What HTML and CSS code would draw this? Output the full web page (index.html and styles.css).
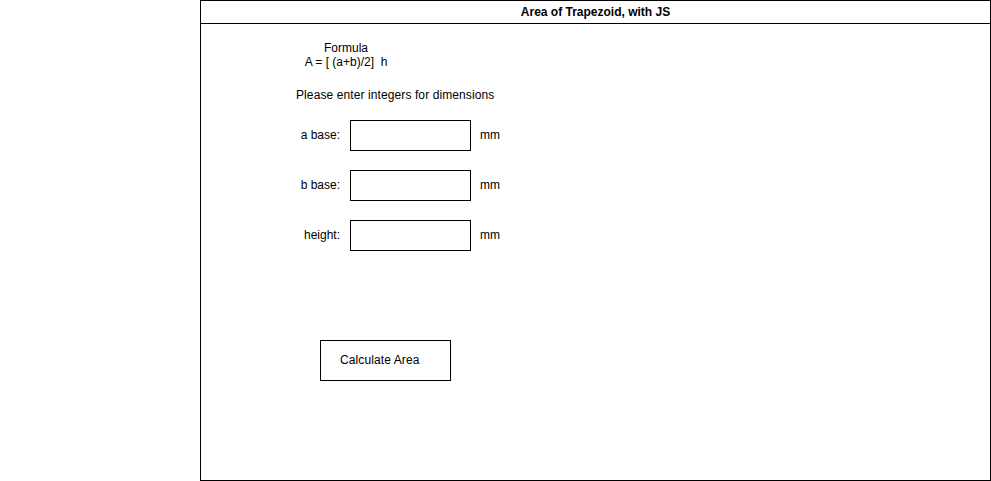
FILE: index.html
```html
<!DOCTYPE html>
<html>
<head>
<meta charset="utf-8">
<link rel="stylesheet" href="styles.css">
</head>
<body>
<div class="page">
  <div class="spacer"></div>
  <div class="panel">
    <div class="header">Area of Trapezoid, with JS</div>
    <div class="content">
      <div class="formula">
        <div>Formula</div>
        <div>A = [ (a+b)/2]&nbsp; h</div>
      </div>
      <div class="hint">Please enter integers for dimensions</div>
      <div class="rows">
        <div class="row"><label class="lbl" for="a">a base:</label><input id="a" class="field" type="text"><span class="unit">mm</span></div>
        <div class="row"><label class="lbl" for="b">b base:</label><input id="b" class="field" type="text"><span class="unit">mm</span></div>
        <div class="row"><label class="lbl" for="h">height:</label><input id="h" class="field" type="text"><span class="unit">mm</span></div>
      </div>
      <button class="calc" type="button">Calculate Area</button>
    </div>
  </div>
</div>
</body>
</html>
```
FILE: styles.css
```css
html, body {
  margin: 0;
  padding: 0;
  background: #fff;
}
body {
  font-family: "Liberation Sans", Arial, sans-serif;
  font-size: 12px;
  color: #000;
}
.page {
  display: flex;
  width: 991px;
  height: 481px;
}
.spacer {
  width: 200px;
  flex: none;
}
.panel {
  width: 791px;
  height: 481px;
  box-sizing: border-box;
  border: 1px solid #000;
  display: flex;
  flex-direction: column;
}
.header {
  height: 22px;
  line-height: 22px;
  border-bottom: 1px solid #000;
  text-align: center;
  font-weight: bold;
}
.content {
  display: flex;
  flex-direction: column;
  align-items: flex-start;
}
.formula {
  margin-top: 17px;
  margin-left: 95px;
  width: 100px;
  text-align: center;
  line-height: 14px;
}
.hint {
  margin-top: 19px;
  margin-left: 95px;
  line-height: 14px;
  letter-spacing: 0.1px;
}
.rows {
  margin-top: 18px;
  display: flex;
  flex-direction: column;
  gap: 19px;
}
.row {
  display: flex;
  align-items: center;
  height: 31px;
}
.lbl {
  width: 139px;
  text-align: right;
  padding-bottom: 2px;
}
.field {
  margin: 0 0 0 10px;
  width: 121px;
  height: 31px;
  box-sizing: border-box;
  border: 1px solid #000;
  border-radius: 0;
  padding: 0 4px;
  font: inherit;
  outline: none;
  background: #fff;
}
.unit {
  margin-left: 9px;
  padding-bottom: 2px;
}
.calc {
  margin-top: 89px;
  margin-left: 119px;
  width: 131px;
  height: 41px;
  box-sizing: border-box;
  border: 1px solid #000;
  border-radius: 0;
  background: #fff;
  padding: 0 0 2px 19px;
  text-align: left;
  font: inherit;
  color: #000;
  letter-spacing: 0.1px;
}
```
